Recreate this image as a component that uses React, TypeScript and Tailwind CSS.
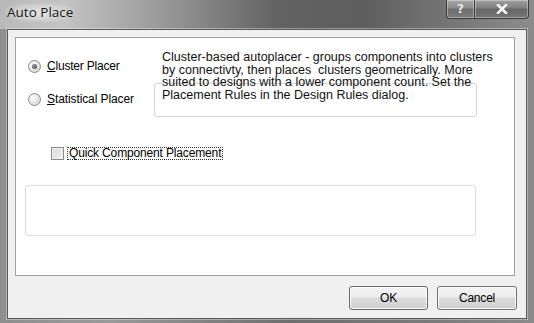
export default function App() {
  return (
    <div
      className="flex h-[323px] w-[534px] flex-col overflow-hidden bg-[linear-gradient(90deg,#8e8e8e_0%,#9a9a9a_20%,#6e6e6e_55%,#7a7a7a_80%,#8a8a8a_100%)] font-['Liberation_Sans',Arial,sans-serif] text-black"
    >
      {/* title bar */}
      <div className="flex h-[29px] shrink-0 items-start justify-between bg-[linear-gradient(90deg,#b9b9b9_0%,#c4c4c4_12%,#9a9a9a_30%,#626262_52%,#5e5e5e_68%,#777777_85%,#8c8c8c_100%)]">
        <div className="ml-[5px] mt-[3px] rounded-full bg-[radial-gradient(ellipse_at_center,rgba(232,232,232,0.9)_0%,rgba(220,220,220,0.55)_55%,rgba(200,200,200,0)_80%)] px-[2px] font-['Open_Sans',sans-serif] text-[13.5px] leading-[19px] text-[#1a1a1a]">
          Auto Place
        </div>
        <div className="mr-[5px] flex">
          <div className="flex h-[19px] w-[29px] items-center justify-center rounded-bl-[4px] border border-t-0 border-[#3c3c3c] bg-[linear-gradient(180deg,#a8a8a8_0%,#8a8a8a_45%,#6e6e6e_50%,#7c7c7c_100%)] shadow-[inset_0_0_0_1px_rgba(255,255,255,0.35)]">
            <span className="font-['DejaVu_Sans',sans-serif] text-[12px] font-bold leading-none text-[#e8e8e8]">?</span>
          </div>
          <div className="flex h-[19px] w-[54px] items-center justify-center rounded-br-[4px] border border-l-0 border-t-0 border-[#3c3c3c] bg-[linear-gradient(180deg,#a0a0a0_0%,#808080_45%,#666666_50%,#747474_100%)] shadow-[inset_0_0_0_1px_rgba(255,255,255,0.35)]">
            <svg width="12" height="10" viewBox="0 0 12 10">
              <path d="M2 1 L10 9 M10 1 L2 9" stroke="#f4f4f4" strokeWidth="2.6" strokeLinecap="square" />
            </svg>
          </div>
        </div>
      </div>

      {/* client area */}
      <div className="mx-[7px] mb-[4px] flex flex-1 flex-col border border-[#5a5a5a] bg-[#f0f0f0] shadow-[0_0_0_1px_rgba(255,255,255,0.35)]">
        <div className="ml-[7px] mr-[11px] mt-[7px] h-[239px] border border-[#a0a0a0] bg-white">
          <div className="flex pt-[14px]">
            <div className="ml-[12px] mt-[7px] flex w-[125px] flex-col gap-[19px] text-[12px]">
              <div className="flex h-[14px] items-center">
                <span className="flex h-[13px] w-[13px] items-center justify-center rounded-full border border-[#8a8a8a] bg-[radial-gradient(circle_at_35%_35%,#ffffff_0%,#dcdcdc_70%,#cfcfcf_100%)]">
                  <span className="h-[5px] w-[5px] rounded-full bg-[radial-gradient(circle_at_40%_40%,#9a9a9a_0%,#3a3a3a_100%)]" />
                </span>
                <span className="ml-[6px] leading-[14px] tracking-[-0.2px]">
                  <span className="underline">C</span>luster Placer
                </span>
              </div>
              <div className="flex h-[14px] items-center">
                <span className="h-[13px] w-[13px] rounded-full border border-[#8a8a8a] bg-[radial-gradient(circle_at_35%_35%,#ffffff_0%,#dcdcdc_70%,#cfcfcf_100%)]" />
                <span className="ml-[6px] leading-[14px] tracking-[-0.1px]">
                  <span className="underline">S</span>tatistical Placer
                </span>
              </div>
            </div>
            <div className="grid">
              <div className="col-start-1 row-start-1 ml-[1px] mt-[31px] h-[34px] w-[323px] rounded-[3px] border border-[#d5d5d5]" />
              <div className="col-start-1 row-start-1 -mt-[1px] pl-[9px] text-[12.5px] leading-[12.5px] text-[#111]">
                <div className="whitespace-pre">Cluster-based autoplacer - groups components into clusters</div>
                <div className="whitespace-pre">by connectivty, then places  clusters geometrically. More</div>
                <div className="whitespace-pre">suited to designs with a lower component count. Set the</div>
                <div className="whitespace-pre">Placement Rules in the Design Rules dialog.</div>
              </div>
            </div>
          </div>

          <div className="ml-[35px] mt-[30px] flex items-center">
            <span className="h-[13px] w-[13px] border border-[#8a8a8a] bg-[linear-gradient(135deg,#d8d8d8_0%,#f2f2f2_100%)] shadow-[inset_0_0_0_1px_#f4f4f4]" />
            <span className="ml-[3px] border border-dotted border-[#333] px-[1px] text-[12px] leading-[11px] tracking-[-0.15px]">
              Quick Component Placement
            </span>
          </div>

          <div className="ml-[9px] mt-[25px] h-[51px] w-[451px] rounded-[3px] border border-[#dcdcdc]" />
        </div>

        <div className="mr-[9px] mt-[10px] flex justify-end gap-[9px] text-[12px]">
          <button className="h-[24px] w-[79px] rounded-[3px] border border-[#6a6a6a] bg-[linear-gradient(180deg,#f4f4f4_0%,#ececec_45%,#dcdcdc_50%,#d0d0d0_100%)] shadow-[inset_0_0_0_1px_#fbfbfb] tracking-[-0.2px]">
            OK
          </button>
          <button className="h-[24px] w-[80px] rounded-[3px] border border-[#707070] bg-[linear-gradient(180deg,#f4f4f4_0%,#ececec_45%,#dcdcdc_50%,#d0d0d0_100%)] shadow-[inset_0_0_0_1px_#fbfbfb] tracking-[-0.2px]">
            Cancel
          </button>
        </div>
      </div>
    </div>
  )
}
